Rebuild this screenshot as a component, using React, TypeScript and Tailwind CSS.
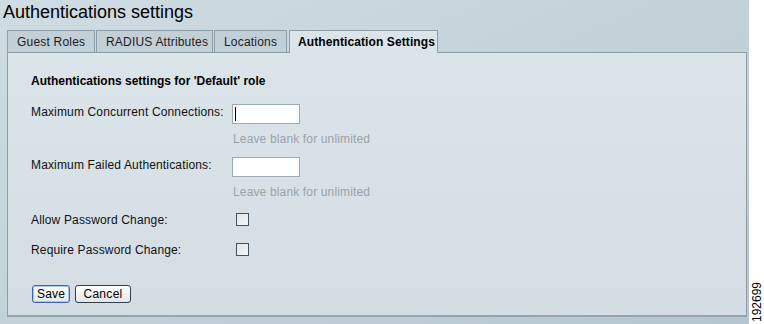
const font = { fontFamily: '"Liberation Sans", Arial, sans-serif' };

function Tab({ label, width, active }: { label: string; width: string; active?: boolean }) {
  if (active) {
    return (
      <div
        className={`${width} relative z-10 -mb-px flex h-[23px] items-center border border-b-0 border-[#8d9eaa] bg-[#dbe4e9] pl-[8px] text-[12px] font-bold tracking-[0.1px] text-black`}
      >
        {label}
      </div>
    );
  }
  return (
    <div
      className={`${width} flex h-[22px] items-center border border-b-0 border-[#8d9eaa] bg-[#c3cfd7] pl-[9px] text-[12px] tracking-[0.2px] text-[#1c1c1c]`}
    >
      {label}
    </div>
  );
}

function TextBox({ caret }: { caret?: boolean }) {
  return (
    <div className="flex h-[20px] w-[68px] items-center border border-[#9fa9b2] bg-white pl-[2px]">
      {caret ? <span className="h-[14px] w-px bg-black" /> : null}
    </div>
  );
}

function CheckBox() {
  return (
    <span className="block h-[13px] w-[13px] border border-[#3f5566] bg-linear-to-br from-[#dfe5e8] to-[#f6f8f9]" />
  );
}

function Hint() {
  return (
    <div className="ml-[202px] h-[14px] text-[12px] leading-[14px] tracking-[0.15px] text-[#9aa3a8]">
      Leave blank for unlimited
    </div>
  );
}

export default function App() {
  return (
    <div className="flex h-[324px] w-[764px] overflow-hidden bg-white" style={font}>
      <div className="h-full w-[749px] bg-linear-to-br from-[#d0dce3] via-[#c3d1d9] to-[#b6c6d0] pl-[7px]">
        <h1 className="-ml-[4px] h-[30px] pt-[1px] text-[18px] leading-[22px] text-black">Authentications settings</h1>

        <div className="flex items-end gap-px">
          <Tab label="Guest Roles" width="w-[88px]" />
          <Tab label="RADIUS Attributes" width="w-[117px]" />
          <Tab label="Locations" width="w-[73px]" />
          <Tab label="Authentication Settings" width="w-[149px] ml-px" active />
        </div>

        <div className="h-[265px] w-[740px] border border-b-2 border-[#8d9eaa] border-b-[#95a5b0] bg-linear-to-b from-[#dbe4e9] to-[#d3dde3] pl-[23px] pt-[21px] text-[12px] tracking-[0.15px] text-[#111]">
          <div className="h-[14px] font-bold leading-[14px] tracking-normal text-black">
            Authentications settings for 'Default' role
          </div>

          <div className="mt-[16px] flex items-start">
            <div className="w-[201px] pt-[1px] leading-[14px]">Maximum Concurrent Connections:</div>
            <TextBox caret />
          </div>
          <div className="mt-[8px]">
            <Hint />
          </div>

          <div className="mt-[11px] flex items-start">
            <div className="w-[201px] pt-[1px] leading-[14px]">Maximum Failed Authentications:</div>
            <TextBox />
          </div>
          <div className="mt-[8px]">
            <Hint />
          </div>

          <div className="mt-[14px] flex h-[13px] items-center">
            <div className="w-[205px] leading-[14px]">Allow Password Change:</div>
            <CheckBox />
          </div>

          <div className="mt-[17px] flex h-[13px] items-center">
            <div className="w-[205px] leading-[14px]">Require Password Change:</div>
            <CheckBox />
          </div>

          <div className="ml-[1px] mt-[29px] flex gap-[5px]">
            <button
              type="button"
              className="flex h-[18px] w-[38px] items-center justify-center rounded-[3px] border border-[#3b66b3] bg-linear-to-b from-white to-[#e4e6e8] text-[12px] tracking-[0.2px] text-black shadow-[inset_0_0_0_1px_#a9c4ec]"
              style={font}
            >
              Save
            </button>
            <button
              type="button"
              className="flex h-[18px] w-[56px] items-center justify-center rounded-[3px] border border-[#30404c] bg-linear-to-b from-white to-[#e4e6e8] text-[12px] tracking-[0.3px] text-black"
              style={font}
            >
              Cancel
            </button>
          </div>
        </div>
      </div>

      <div className="relative h-full w-[15px] bg-white">
        <span className="absolute bottom-[2px] left-[15px] origin-bottom-left -rotate-90 whitespace-nowrap text-[12px] leading-[13px] text-black">
          192699
        </span>
      </div>
    </div>
  );
}
